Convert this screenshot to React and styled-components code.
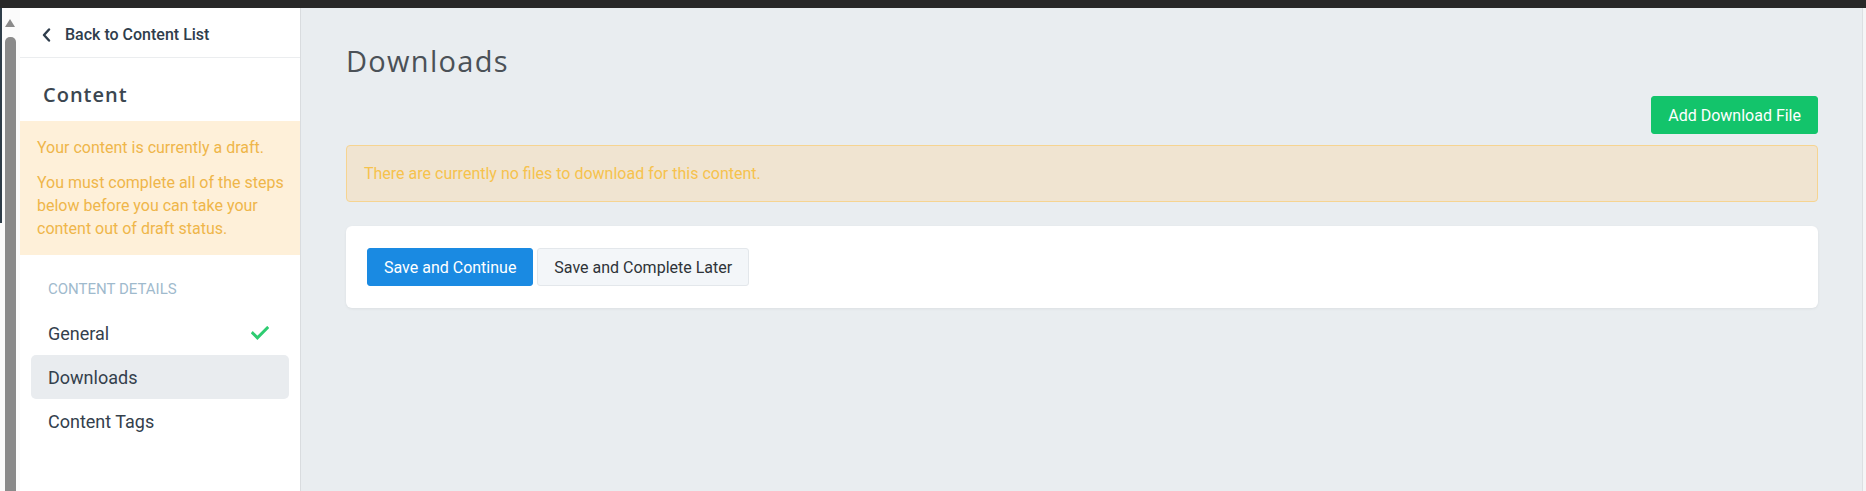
import React from "react";
import styled, { createGlobalStyle } from "styled-components";

const Global = createGlobalStyle`
  html, body { margin: 0; padding: 0; height: 100%; }
  body { font-family: Roboto, "Liberation Sans", sans-serif; background: #fff; overflow: hidden; }
  #root { height: 100%; }
`;

const Page = styled.div`
  display: flex;
  flex-direction: column;
  height: 491px;
  width: 1866px;
`;

const TopBar = styled.div`
  height: 8px;
  background: #282828;
  flex: none;
`;

const Body = styled.div`
  flex: 1;
  display: flex;
  min-height: 0;
`;

const FrameEdge = styled.div`
  width: 20px;
  flex: none;
  position: relative;
  background: #fbfbfb;
`;

const DarkLine = styled.div`
  position: absolute;
  left: 0;
  top: 0;
  width: 2px;
  height: 215px;
  background: #2e3d49;
`;

const ScrollArrow = styled.div`
  position: absolute;
  left: 5px;
  top: 11px;
  width: 0;
  height: 0;
  border-left: 5px solid transparent;
  border-right: 5px solid transparent;
  border-bottom: 8px solid #8a8a8a;
`;

const ScrollThumb = styled.div`
  position: absolute;
  left: 5px;
  top: 29px;
  width: 11px;
  bottom: 0;
  background: #8a8a8a;
  border-radius: 5px 5px 0 0;
`;

const Sidebar = styled.aside`
  width: 280px;
  flex: none;
  background: #fff;
  border-right: 1px solid #d9dcdf;
  display: flex;
  flex-direction: column;
`;

const BackLink = styled.a`
  display: flex;
  align-items: center;
  gap: 14px;
  height: 50px;
  padding: 4px 0 0 22px;
  box-sizing: border-box;
  border-bottom: 1px solid #ebedef;
  color: #2f3d4c;
  font-size: 16px;
  font-weight: 500;
  text-decoration: none;
`;

const SideTitle = styled.h2`
  margin: 0;
  padding: 23px 0 0 23px;
  height: 63px;
  box-sizing: border-box;
  font-family: "Open Sans", sans-serif;
  font-size: 20px;
  line-height: 28px;
  font-weight: 600;
  letter-spacing: 1px;
  color: #3b4650;
`;

const Draft = styled.div`
  background: #fef0d9;
  color: #efb64a;
  font-size: 16px;
  line-height: 23px;
  padding: 15px 16px 15px 17px;
  display: flex;
  flex-direction: column;
  gap: 12px;
`;

const DraftText = styled.p`
  margin: 0;
`;

const SectionLabel = styled.div`
  padding: 25px 0 0 28px;
  height: 56px;
  box-sizing: border-box;
  font-size: 15px;
  line-height: 18px;
  color: #9fbacd;
  text-transform: uppercase;
`;

const NavList = styled.nav`
  display: flex;
  flex-direction: column;
  padding: 0 11px;
`;

const NavItem = styled.div`
  height: 44px;
  display: flex;
  align-items: center;
  justify-content: space-between;
  padding: 0 20px 0 17px;
  border-radius: 5px;
  font-size: 18px;
  color: #34404c;
  background: ${(p) => (p.$active ? "#e9ecef" : "transparent")};
`;

const Main = styled.main`
  flex: 1;
  background: #e9edf0;
  padding: 0 44px 0 45px;
  display: flex;
  flex-direction: column;
`;

const Heading = styled.h1`
  margin: 0;
  padding-top: 35px;
  height: 88px;
  box-sizing: border-box;
  font-family: "Open Sans", sans-serif;
  font-size: 29px;
  line-height: 36px;
  font-weight: 400;
  letter-spacing: 1.3px;
  color: #4b5157;
`;

const ActionRow = styled.div`
  display: flex;
  justify-content: flex-end;
  margin-bottom: 11px;
`;

const Button = styled.button`
  height: 38px;
  padding: 0 16px;
  border-radius: 3px;
  font-family: Roboto, sans-serif;
  font-size: 16px;
  font-weight: 400;
  border: 1px solid ${(p) => p.$border};
  background: ${(p) => p.$bg};
  color: ${(p) => p.$color};
  cursor: pointer;
`;

const Alert = styled.div`
  height: 57px;
  box-sizing: border-box;
  background: #f0e4d1;
  border: 1px solid #f6d491;
  border-radius: 4px;
  display: flex;
  align-items: center;
  padding: 0 17px 1px;
  color: #f6c24d;
  font-size: 16px;
  margin-bottom: 24px;
`;

const Card = styled.div`
  background: #fff;
  border-radius: 6px;
  box-shadow: 0 1px 3px rgba(0, 0, 0, 0.06);
  padding: 22px 21px;
  display: flex;
  gap: 4px;
`;

const RightEdge = styled.div`
  width: 3px;
  flex: none;
  background: #f4f5f6;
  border-left: 1px solid #dcdfe2;
`;

const Chevron = () => (
  <svg width="9" height="14" viewBox="0 0 9 14" fill="none">
    <path d="M7 1.5L2 7l5 5.5" stroke="#2f3d4c" strokeWidth="2.4" strokeLinecap="round" strokeLinejoin="round" />
  </svg>
);

const Check = () => (
  <svg width="18" height="14" viewBox="0 0 18 14" fill="none">
    <path d="M1.8 7.2l4.6 4.6L16.2 2" stroke="#2ecc71" strokeWidth="3" strokeLinecap="square" />
  </svg>
);

export default function App() {
  return (
    <>
      <Global />
      <Page>
        <TopBar />
        <Body>
          <FrameEdge>
            <DarkLine />
            <ScrollArrow />
            <ScrollThumb />
          </FrameEdge>
          <Sidebar>
            <BackLink href="#">
              <Chevron />
              Back to Content List
            </BackLink>
            <SideTitle>Content</SideTitle>
            <Draft>
              <DraftText>Your content is currently a draft.</DraftText>
              <DraftText>
                You must complete all of the steps below before you can take your content out of draft status.
              </DraftText>
            </Draft>
            <SectionLabel>Content Details</SectionLabel>
            <NavList>
              <NavItem>
                General
                <Check />
              </NavItem>
              <NavItem $active>Downloads</NavItem>
              <NavItem>Content Tags</NavItem>
            </NavList>
          </Sidebar>
          <Main>
            <Heading>Downloads</Heading>
            <ActionRow>
              <Button $bg="#13c46b" $border="#13c46b" $color="#fff">
                Add Download File
              </Button>
            </ActionRow>
            <Alert>There are currently no files to download for this content.</Alert>
            <Card>
              <Button $bg="#1a8ae2" $border="#1a8ae2" $color="#fff">
                Save and Continue
              </Button>
              <Button $bg="#f3f6f9" $border="#e3e7eb" $color="#2e3338">
                Save and Complete Later
              </Button>
            </Card>
          </Main>
          <RightEdge />
        </Body>
      </Page>
    </>
  );
}
